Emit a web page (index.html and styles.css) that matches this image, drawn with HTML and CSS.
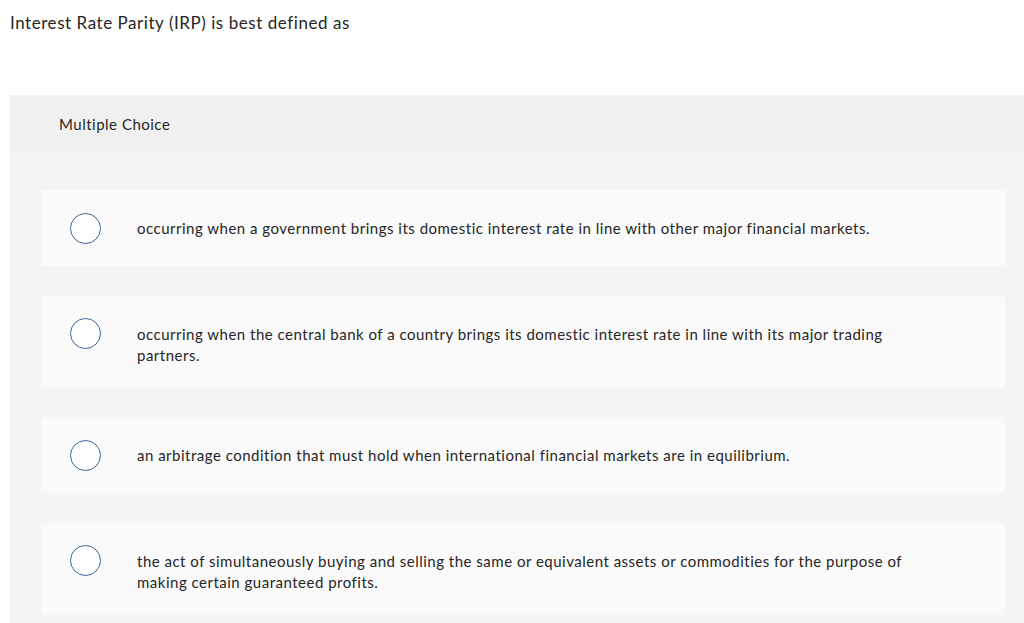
FILE: index.html
```html
<!DOCTYPE html>
<html>
<head>
<meta charset="utf-8">
<link rel="stylesheet" href="styles.css">
</head>
<body>
<div class="page">
  <p class="question">Interest Rate Parity (IRP) is best defined as</p>
  <div class="panel">
    <div class="panel-head">Multiple Choice</div>
    <div class="panel-body">
      <div class="option">
        <span class="radio"><span class="circle"></span></span>
        <span class="text">occurring when a government brings its domestic interest rate in line with other major financial markets.</span>
      </div>
      <div class="option">
        <span class="radio"><span class="circle"></span></span>
        <span class="text">occurring when the central bank of a country brings its domestic interest rate in line with its major trading partners.</span>
      </div>
      <div class="option">
        <span class="radio"><span class="circle"></span></span>
        <span class="text">an arbitrage condition that must hold when international financial markets are in equilibrium.</span>
      </div>
      <div class="option">
        <span class="radio"><span class="circle"></span></span>
        <span class="text">the act of simultaneously buying and selling the same or equivalent assets or commodities for the purpose of making certain guaranteed profits.</span>
      </div>
    </div>
  </div>
</div>
</body>
</html>
```

FILE: styles.css
```css
html, body {
  margin: 0;
  padding: 0;
  background: #ffffff;
}
body {
  font-family: Lato, "Liberation Sans", sans-serif;
  color: #262626;
  overflow: hidden;
}
.page {
  padding-left: 10px;
}
.question {
  margin: 0;
  padding-top: 12px;
  font-size: 17px;
  line-height: 22px;
  letter-spacing: 0.55px;
  height: 83px;
}
.panel {
  background: #f4f4f4;
  padding-bottom: 8px;
}
.panel-head {
  background: #f0f0f0;
  height: 58px;
  display: flex;
  align-items: center;
  padding-left: 49px;
  font-size: 15px;
  letter-spacing: 0.5px;
}
.panel-body {
  padding: 37px 19px 0 31px;
  display: flex;
  flex-direction: column;
  gap: 29.5px;
}
.option {
  background: #fafafa;
  border-radius: 3px;
  padding: 22px 0;
  display: flex;
  align-items: flex-start;
}
.radio {
  flex: none;
  width: 96px;
  height: 32px;
  display: flex;
  align-items: center;
  padding-left: 29px;
  box-sizing: border-box;
}
.circle {
  width: 29px;
  height: 29px;
  border: 1.5px solid #3b679b;
  border-radius: 50%;
  background: #ffffff;
}
.text {
  padding-top: 6px;
  font-size: 15px;
  line-height: 21px;
  letter-spacing: 0.5px;
  max-width: 800px;
}
```
